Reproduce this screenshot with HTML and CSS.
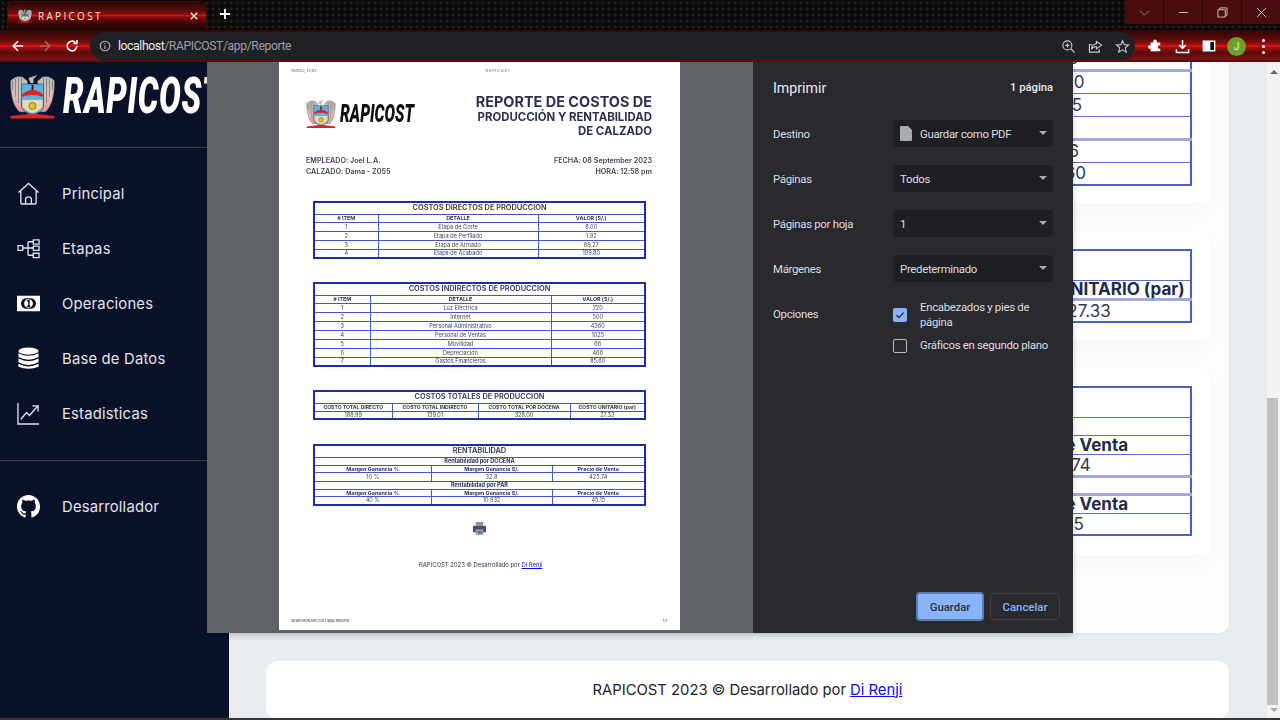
FILE: index.html
```html
<!DOCTYPE html>
<html lang="es">
<head>
<meta charset="utf-8">
<title>RAPICOST</title>
<link rel="stylesheet" href="styles.css">
</head>
<body>
<svg class="defs" width="0" height="0" aria-hidden="true">
  <defs>
    <linearGradient id="wing" x1="0" y1="0" x2="0" y2="1">
      <stop offset="0" stop-color="#b9b9b9"/><stop offset=".55" stop-color="#d9c0c0"/><stop offset="1" stop-color="#ef8f8f"/>
    </linearGradient>
  </defs>
  <symbol id="emblem" viewBox="0 0 46 46">
    <path d="M1 7 Q6 1 13 3 L18 7 L18 38 L10 38 Q1 30 1 7Z" fill="url(#wing)" stroke="#555" stroke-width=".5"/>
    <path d="M45 7 Q40 1 33 3 L28 7 L28 38 L36 38 Q45 30 45 7Z" fill="url(#wing)" stroke="#555" stroke-width=".5"/>
    <path d="M3 7 L3 16 M6 5 L6 23 M9 4 L9 29 M12 4 L12 33 M43 7 L43 16 M40 5 L40 23 M37 4 L37 29 M34 4 L34 33" stroke="#777" stroke-width=".8"/>
    <path d="M19 4 L28 1 L24 5 L24 9 L21 9Z" fill="#bdbdbd"/>
    <path d="M12 10 H34 V32 Q34 38 23 41 Q12 38 12 32Z" fill="#58b4de" stroke="#333" stroke-width=".5"/>
    <path d="M22 11 H24 V17 H22Z" fill="#222"/>
    <path d="M12 21 Q23 11 34 21 V23 Q23 19 12 23Z" fill="#e3241d"/>
    <path d="M13 26 H33 V33 Q28 38 23 39 Q18 38 13 33Z" fill="#f2d7a8"/>
    <circle cx="23" cy="32" r="3.6" fill="#d9c13c" stroke="#333" stroke-width=".5"/>
    <path d="M1 42 L23 39.5 L45 42 V44.5 H1Z" fill="#d8242a"/>
  </symbol>
  <symbol id="printer" viewBox="0 0 16 16">
    <path d="M4 1 H12 V5 H4Z" fill="#8a929c"/>
    <path d="M2 5 H14 Q15 5 15 6 V12 H1 V6 Q1 5 2 5Z" fill="#4a5160"/>
    <path d="M4 9 H12 V15 H4Z" fill="#9aa3ad"/>
    <path d="M6 11 H10 V13 H6Z" fill="#3b64a8"/>
  </symbol>
</svg>

<header class="tabbar">
  <div class="tab">
    <svg class="tab-favicon"><use href="#emblem"/></svg>
    <span class="tab-title">RAPICOST</span>
    <svg class="tab-close" viewBox="0 0 10 10"><path d="M1 1 L9 9 M9 1 L1 9"/></svg>
  </div>
  <svg class="new-tab" viewBox="0 0 12 12"><path d="M6 1 V11 M1 6 H11"/></svg>
  <div class="window-controls">
    <div class="win-btn"><svg viewBox="0 0 12 12"><path d="M1 4 L6 9 L11 4"/></svg></div>
    <div class="win-btn"><svg viewBox="0 0 12 12"><path d="M1 6 H11"/></svg></div>
    <div class="win-btn"><svg viewBox="0 0 12 12"><path d="M1 3 H9 V11 H1Z M3 3 V1 H11 V9 H9"/></svg></div>
    <div class="win-btn"><svg viewBox="0 0 12 12"><path d="M1 1 L11 11 M11 1 L1 11"/></svg></div>
  </div>
</header>

<div class="toolbar">
  <svg class="tool-icon" viewBox="0 0 16 16"><path d="M14 8 H2.5 M8 2.5 L2.5 8 L8 13.5"/></svg>
  <svg class="tool-icon dim" viewBox="0 0 16 16"><path d="M2 8 H13.5 M8 2.5 L13.5 8 L8 13.5"/></svg>
  <svg class="tool-icon" viewBox="0 0 16 16"><path d="M13.5 8 A5.5 5.5 0 1 1 11.6 3.8 M13.6 1.2 V5.2 H9.6"/></svg>
  <div class="omnibox">
    <svg class="omni-info" viewBox="0 0 12 12"><circle cx="6" cy="6" r="4.8"/><path d="M6 5.4 V9 M6 3 V4.2"/></svg>
    <span class="url"><span class="url-host">localhost</span>/RAPICOST/app/Reporte</span>
    <div class="omni-actions">
      <svg viewBox="0 0 16 16"><circle cx="6.8" cy="6.8" r="4.8"/><path d="M10.4 10.4 L14.5 14.5 M4.6 6.8 H9 M6.8 4.6 V9"/></svg>
      <svg viewBox="0 0 16 16"><path d="M9 2.5 L14.5 6.5 L9 10.5 V8 Q5 8 3.5 11 Q4 5.5 9 5Z M12 11 V14 H1.5 V6 H4"/></svg>
      <svg viewBox="0 0 16 16"><path d="M8 1.8 L9.8 6 L14.4 6.4 L11 9.4 L12 14 L8 11.6 L4 14 L5 9.4 L1.6 6.4 L6.2 6Z"/></svg>
    </div>
  </div>
  <div class="ext-icons">
    <svg class="ext-fill" viewBox="0 0 16 16"><path d="M6 2.5 A2 2 0 0 1 10 2.5 V4 H14 V7 H13 A2 2 0 0 0 13 11 H14 V14 H3 V11 H2 A2 2 0 0 1 2 7 H3 V4 H6Z"/></svg>
    <svg class="ext-line" viewBox="0 0 16 16"><path d="M8 1 V9.5 M4.5 6.5 L8 10 L11.5 6.5 M1.5 11 V14.5 H14.5 V11"/></svg>
    <svg class="ext-panel" viewBox="0 0 16 16"><path class="panel-frame" d="M1.5 2.5 H14.5 V13.5 H1.5Z"/><path class="panel-side" d="M1.5 2.5 H9.5 V13.5 H1.5Z"/></svg>
    <div class="avatar">J</div>
    <div class="kebab"><i></i><i></i><i></i></div>
  </div>
</div>

<div class="viewport">
  <aside class="sidebar">
    <div class="brand">
      <svg class="brand-emblem"><use href="#emblem"/></svg>
      <span class="brand-name">RAPICOST</span>
    </div>
    <nav class="nav nav-main">
      <a class="nav-item">
        <svg class="nav-icon" viewBox="0 0 24 24"><path d="M1.5 11 L12 1.5 L22.5 11 M4 9 V21 Q4 23 6 23 H18 Q20 23 20 21 V9 M9 23 V18 Q9 15.5 12 15.5 Q15 15.5 15 18 V23"/></svg>
        <span>Principal</span>
      </a>
      <a class="nav-item">
        <svg class="nav-icon" viewBox="0 0 24 24"><path d="M1 9 H6 V14 H1Z M17 3 H23 V7.5 H17Z M17 9.5 H23 V14 H17Z M17 17 H23 V21.5 H17Z M6 11.5 H17 M11.5 5 V19 M11.5 5 H17 M11.5 19 H17"/></svg>
        <span>Etapas</span>
      </a>
      <a class="nav-item">
        <svg class="nav-icon solid" viewBox="0 0 24 24"><path fill-rule="evenodd" d="M0 4 H24 V20 H0Z M4 12 Q5 7 9 6.5 H15 Q19 7 20 12 Q19 17 15 17.5 H9 Q5 17 4 12Z"/><circle cx="12" cy="12" r="4.6" fill="#fff"/><path class="bill-one" d="M10.6 9.6 L12.4 8.6 V15 M10.6 15 H14"/></svg>
        <span>Operaciones</span>
      </a>
      <a class="nav-item">
        <svg class="nav-icon solid" viewBox="0 0 24 24"><ellipse cx="12" cy="4.2" rx="10.5" ry="3.8"/><path d="M1.5 6.5 Q12 12 22.5 6.5 V10.5 Q12 16 1.5 10.5Z M1.5 12 Q12 17.5 22.5 12 V16 Q12 21.5 1.5 16Z M1.5 17.5 Q12 23 22.5 17.5 V20.5 Q12 25 1.5 20.5Z"/></svg>
        <span>Base de Datos</span>
      </a>
      <a class="nav-item">
        <svg class="nav-icon" viewBox="0 0 24 24"><path d="M1 1 V23 H23 M4 18 L10 11 L13 14 L21 5 M16 4 H22 V10"/></svg>
        <span>Estadisticas</span>
      </a>
    </nav>
    <div class="nav-sep"></div>
    <nav class="nav">
      <a class="nav-item">
        <svg class="nav-icon solid" viewBox="0 0 16 16"><path d="M8 0C3.58 0 0 3.58 0 8c0 3.54 2.29 6.53 5.47 7.59.4.07.55-.17.55-.38 0-.19-.01-.82-.01-1.49-2.01.37-2.53-.49-2.69-.94-.09-.23-.48-.94-.82-1.13-.28-.15-.68-.52-.01-.53.63-.01 1.08.58 1.23.82.72 1.21 1.87.87 2.33.66.07-.52.28-.87.51-1.07-1.78-.2-3.64-.89-3.64-3.95 0-.87.31-1.59.82-2.15-.08-.2-.36-1.02.08-2.12 0 0 .67-.21 2.2.82.64-.18 1.32-.27 2-.27s1.36.09 2 .27c1.53-1.04 2.2-.82 2.2-.82.44 1.1.16 1.92.08 2.12.51.56.82 1.27.82 2.15 0 3.07-1.87 3.75-3.65 3.95.29.25.54.73.54 1.48 0 1.07-.01 1.93-.01 2.2 0 .21.15.46.55.38A8.01 8.01 0 0 0 16 8c0-4.42-3.58-8-8-8z"/></svg>
        <span>Desarrollador</span>
      </a>
    </nav>
  </aside>

  <main class="main">
    <div class="content-card">
      <section class="card">
        <table class="report-table col-wide">
          <tr><td>500</td></tr>
          <tr class="thick"><td>4360</td></tr>
          <tr><td>1025</td></tr>
          <tr><td>66</td></tr>
          <tr class="thick"><td>466</td></tr>
          <tr><td>85.60</td></tr>
        </table>
      </section>
      <section class="card">
        <table class="report-table col-narrow rows-b">
          <tr class="title-row"><th></th></tr>
          <tr><th>COSTO UNITARIO (par)</th></tr>
          <tr class="thick"><td>27.33</td></tr>
        </table>
      </section>
      <section class="card">
        <table class="report-table col-wide rows-c">
          <tr class="title-row"><th></th></tr>
          <tr class="sub-row"><th></th></tr>
          <tr><th>Precio de Venta</th></tr>
          <tr class="tall"><td>425.74</td></tr>
          <tr class="sub-row thick"><th></th></tr>
          <tr class="thick"><th>Precio de Venta</th></tr>
          <tr class="tall"><td>45.15</td></tr>
        </table>
      </section>
    </div>
    <footer class="page-footer"><div>RAPICOST 2023 © Desarrollado por <a class="link">Di Renji</a></div></footer>
  </main>
  <div class="scrollbar">
    <span class="arrow-up"></span>
    <span class="thumb"></span>
    <span class="arrow-down"></span>
  </div>

  <div class="print-dialog">
    <div class="preview">
      <article class="paper">
        <div class="paper-head"><span>10/9/23, 13:02</span><span class="paper-head-title">RAPICOST</span></div>
        <div class="doc-top">
          <div class="doc-brand">
            <svg class="doc-emblem"><use href="#emblem"/></svg>
            <span class="doc-name">RAPICOST</span>
          </div>
          <div class="doc-title">
            <div class="t1">REPORTE DE COSTOS DE</div>
            <div class="t2">PRODUCCIÓN Y RENTABILIDAD</div>
            <div class="t2">DE CALZADO</div>
          </div>
        </div>
        <div class="doc-meta">
          <div>EMPLEADO: Joel L.A.<br>CALZADO: Dama - Z055</div>
          <div class="meta-right">FECHA: 08 September 2023<br>HORA: 12:58 pm</div>
        </div>

        <table class="ptable t-direct">
          <colgroup><col class="c64"><col class="c160"><col></colgroup>
          <tr class="pt-title"><th colspan="3">COSTOS DIRECTOS DE PRODUCCION</th></tr>
          <tr class="pt-head"><th># ITEM</th><th>DETALLE</th><th>VALOR (S/.)</th></tr>
          <tr><td>1</td><td>Etapa de Corte</td><td>8.00</td></tr>
          <tr><td>2</td><td>Etapa de Perfilado</td><td>1.92</td></tr>
          <tr><td>3</td><td>Etapa de Armado</td><td>69.27</td></tr>
          <tr><td>4</td><td>Etapa de Acabado</td><td>109.80</td></tr>
        </table>

        <table class="ptable t-indirect">
          <colgroup><col class="c56"><col class="c181"><col></colgroup>
          <tr class="pt-title"><th colspan="3">COSTOS INDIRECTOS DE PRODUCCION</th></tr>
          <tr class="pt-head"><th># ITEM</th><th>DETALLE</th><th>VALOR (S/.)</th></tr>
          <tr><td>1</td><td>Luz Eléctrica</td><td>720</td></tr>
          <tr><td>2</td><td>Internet</td><td>500</td></tr>
          <tr><td>3</td><td>Personal Administrativo</td><td>4360</td></tr>
          <tr><td>4</td><td>Personal de Ventas</td><td>1025</td></tr>
          <tr><td>5</td><td>Movilidad</td><td>66</td></tr>
          <tr><td>6</td><td>Depreciación</td><td>466</td></tr>
          <tr><td>7</td><td>Gastos Financieros</td><td>85.60</td></tr>
        </table>

        <table class="ptable t-total">
          <colgroup><col class="c78"><col class="c86"><col class="c92"><col></colgroup>
          <tr class="pt-title"><th colspan="4">COSTOS TOTALES DE PRODUCCION</th></tr>
          <tr class="pt-head"><th>COSTO TOTAL DIRECTO</th><th>COSTO TOTAL INDIRECTO</th><th>COSTO TOTAL POR DOCENA</th><th>COSTO UNITARIO (par)</th></tr>
          <tr><td>188.99</td><td>139.01</td><td>328.00</td><td>27.33</td></tr>
        </table>

        <table class="ptable t-rent">
          <colgroup><col class="c117"><col class="c121"><col></colgroup>
          <tr class="pt-title"><th colspan="3">RENTABILIDAD</th></tr>
          <tr class="pt-sub"><th colspan="3">Rentabilidad por DOCENA</th></tr>
          <tr class="pt-head"><th>Margen Ganancia %</th><th>Margen Ganancia S/.</th><th>Precio de Venta</th></tr>
          <tr><td>10 %</td><td>32.8</td><td>425.74</td></tr>
          <tr class="pt-sub"><th colspan="3">Rentabilidad por PAR</th></tr>
          <tr class="pt-head"><th>Margen Ganancia %</th><th>Margen Ganancia S/.</th><th>Precio de Venta</th></tr>
          <tr><td>40 %</td><td>10.932</td><td>45.15</td></tr>
        </table>

        <svg class="doc-printer"><use href="#printer"/></svg>
        <div class="doc-footer">RAPICOST 2023 © Desarrollado por <a class="link">Di Renji</a></div>
        <div class="paper-foot"><span>localhost/RAPICOST/app/Reporte</span><span>1/1</span></div>
      </article>
    </div>
    <div class="print-panel">
      <div class="panel-head"><span class="panel-title">Imprimir</span><span class="panel-count">1 página</span></div>
      <div class="opt-row"><span>Destino</span>
        <div class="select"><svg class="doc-icon" viewBox="0 0 12 15"><path d="M1 0 H8 L12 4 V14 Q12 15 11 15 H1 Q0 15 0 14 V1 Q0 0 1 0Z"/></svg>Guardar como PDF<i class="caret"></i></div></div>
      <div class="opt-row"><span>Páginas</span><div class="select">Todos<i class="caret"></i></div></div>
      <div class="opt-row"><span>Páginas por hoja</span><div class="select">1<i class="caret"></i></div></div>
      <div class="opt-row"><span>Márgenes</span><div class="select">Predeterminado<i class="caret"></i></div></div>
      <div class="opt-row opt-checks"><span>Opciones</span>
        <div class="checks">
          <div class="check-row"><span class="box on"><svg viewBox="0 0 14 14"><path d="M3.5 7.2 L6 9.6 L10.6 4.6"/></svg></span><span>Encabezados y pies de página</span></div>
          <div class="check-row"><span class="box"></span><span>Gráficos en segundo plano</span></div>
        </div>
      </div>
      <div class="panel-actions">
        <button class="btn btn-primary">Guardar</button>
        <button class="btn">Cancelar</button>
      </div>
    </div>
  </div>
</div>
<div class="window-edge"></div>
</body>
</html>
```
FILE: styles.css
```css
* { box-sizing: border-box; }
html, body { margin: 0; height: 100%; }
body { width: 1280px; height: 720px; overflow: hidden; display: flex; flex-direction: column; font-family: Inter, "Liberation Sans", sans-serif; background: #e9ecef; }
.defs { position: absolute; }

/* Browser chrome */
.tabbar { height: 30px; flex: none; display: flex; align-items: flex-start; position: relative; background-color: #0a0a0a; background-image: radial-gradient(circle at 3px 3px, #1e1e1e 1.4px, transparent 1.8px); background-size: 6px 6px; }
.tab { width: 200px; height: 28px; margin: 1px 0 0 7px; padding: 0 8px 0 10px; display: flex; align-items: center; border-radius: 7px 7px 0 0; background: linear-gradient(#2b0505 0, #4f0c0c 28%, #8f1010 46%, #d81010 50%, #7d0d0d 56%, #3a0707 80%, #2b0505 100%); border: 1px solid #3a1010; border-bottom: 0; }
.tab-favicon { width: 14px; height: 14px; }
.tab-title { margin-left: 6px; color: #e8e0e0; font-size: 10px; letter-spacing: 2.3px; flex: 1; font-family: "Open Sans", sans-serif; font-weight: 400; }
.tab-close { width: 8px; height: 8px; fill: none; stroke: #f2f2f2; stroke-width: 1.6; }
.new-tab { width: 12px; height: 12px; margin: 8px 0 0 12px; fill: none; stroke: #fff; stroke-width: 1.8; }
.window-controls { margin-left: auto; display: flex; height: 24px; gap: 1px; background: #260606; }
.win-btn { width: 38px; height: 24px; background: #4a0d0d; display: flex; align-items: center; justify-content: center; }
.win-btn svg { width: 11px; height: 11px; fill: none; stroke: #d8c4c4; stroke-width: 1; }
.win-btn:first-child svg { stroke: #9c7f7f; }

.toolbar { height: 32px; flex: none; display: flex; align-items: center; background: linear-gradient(#3c0808 0, #350707 5%, #5c0b0b 30%, #a01010 46%, #f01010 50%, #a01010 54%, #5c0b0b 72%, #7a1212 90%, #4a0c0c 100%); padding-left: 11px; }
.tool-icon { width: 14px; height: 14px; margin-right: 13px; fill: none; stroke: #fff; stroke-width: 1.8; flex: none; }
.tool-icon.dim { stroke: #9a6a6a; }
.omnibox { margin-left: -2px; width: 1045px; height: 28px; border-radius: 14px; background: #202124; display: flex; align-items: center; padding: 0 5px 0 9px; flex: none; }
.omni-info { width: 12px; height: 12px; fill: none; stroke: #b0b3b8; stroke-width: 1.1; }
.url { margin-left: 7px; font: 12.2px Roboto, "Liberation Sans", sans-serif; letter-spacing: -.4px; color: #9aa0a6; }
.url-host { color: #e8eaed; }
.omni-actions { margin-left: auto; display: flex; gap: 12px; }
.omni-actions svg { width: 15px; height: 15px; fill: none; stroke: #c4c7cb; stroke-width: 1.2; }
.ext-icons { flex: 1; display: flex; align-items: center; padding-left: 13px; }
.ext-fill { width: 14px; height: 14px; fill: #fff; }
.ext-line { width: 15px; height: 15px; margin-left: 13px; fill: none; stroke: #fff; stroke-width: 1.6; }
.ext-panel { width: 14px; height: 14px; margin-left: 12px; }
.panel-frame { fill: #111; stroke: #fff; stroke-width: 1.6; }
.panel-side { fill: #fff; }
.avatar { width: 19px; height: 19px; margin-left: 11px; border-radius: 50%; background: #6aa12c; color: #e8f3d8; font-size: 10px; display: flex; align-items: center; justify-content: center; }
.kebab { margin-left: 16px; display: flex; flex-direction: column; gap: 3px; }
.kebab i { width: 3px; height: 3px; border-radius: 50%; background: #fff; display: block; }

/* Page */
.viewport { flex: 1; min-height: 0; position: relative; display: flex; overflow: hidden; background: #e9ecef; }
.window-edge { height: 2px; flex: none; background: #34363a; }
.sidebar { width: 229px; flex: none; background: #0a122a; color: #e9ecef; overflow: hidden; }
.brand { height: 86px; border-bottom: 1px solid #3c4150; display: flex; align-items: flex-start; padding: 12px 0 0 9px; }
.brand-emblem { width: 47px; height: 46px; flex: none; }
.brand-name { margin: -3px 0 0 7px; font: italic 900 50px/50px Roboto, sans-serif; color: #fff; letter-spacing: 1px; white-space: nowrap; transform: scaleX(.65); transform-origin: left center; }
.nav { display: flex; flex-direction: column; }
.nav-main { padding-top: 18px; }
.nav-item { height: 55px; display: flex; align-items: center; padding-left: 17px; font-size: 14.8px; letter-spacing: .2px; color: #e2e5ea; }
.nav-item span { margin-left: 22px; }
.nav-icon { width: 23px; height: 23px; flex: none; fill: none; stroke: #dfe2e8; stroke-width: 1.4; }
.nav-icon.solid { fill: #fff; stroke: none; }
.bill-one { fill: none; stroke: #0a122a; stroke-width: 1.6; }
.nav-sep { height: 1px; margin: 19px 0 18px; background: #3c4150; }

.main { flex: 1; min-width: 0; display: flex; flex-direction: column; justify-content: flex-end; overflow: hidden; }
.content-card { flex: none; margin: 0 38px 28px 0; padding: 0 18px 78px 37px; background: #fdfdfd; border-radius: 0 0 10px 0; display: flex; flex-direction: column; gap: 28px; box-shadow: 0 1px 3px rgba(0,0,0,.03); }
.card { padding: 18px 19px 17px 0; background: #fff; border-radius: 12px; box-shadow: 0 8px 24px rgba(0,0,0,.03); }
.card:last-child { padding-bottom: 19px; }
.report-table { margin-left: auto; border-collapse: collapse; border: 2px solid #4a5fc1; font-size: 17px; line-height: 16px; color: #343a50; }
.col-wide { width: 258px; }
.col-narrow { width: 206px; }
.report-table td, .report-table th { border: 1px solid #5b6fca; text-align: center; padding: 0; height: 23px; white-space: nowrap; }
.report-table th { color: #232a4a; font-weight: 700; }
.report-table .thick td, .report-table .thick th { border-top: 3px solid #a0aade; }
.rows-b .title-row th { height: 30px; }
.rows-b th { height: 19px; }
.rows-b td { height: 23px; }
.rows-c .title-row th { height: 30px; }
.rows-c th { height: 19px; }
.rows-c .sub-row th { height: 18px; }
.rows-c tr.tall td { height: 22px; }
.page-footer { flex: none; margin: 0 38px 0 37px; height: 57px; background: #fff; border-radius: 12px 12px 10px 10px; display: flex; align-items: center; justify-content: center; font-size: 14.8px; color: #212529; }
.link { color: #0d0dee; text-decoration: underline; }

.scrollbar { width: 13px; flex: none; background: #f3f3f3; display: flex; flex-direction: column; align-items: center; padding: 8px 0 6px; }
.arrow-up { border: 4px solid transparent; border-top: 0; border-bottom: 4px solid #666; }
.thumb { width: 11px; height: 307px; margin-top: auto; margin-left: -2px; background: #c1c1c1; }
.arrow-down { margin-top: 3px; border: 4px solid transparent; border-bottom: 0; border-top: 4px solid #aaa; }

/* Print dialog */
.print-dialog { position: absolute; left: 207px; top: 0; width: 866px; height: 571px; display: flex; box-shadow: 0 2px 6px rgba(0,0,0,.2); }
.preview { width: 546px; background: #5f6368; padding-left: 72px; overflow: hidden; }
.paper { width: 401px; height: 568px; background: #fff; padding: 0 28px 0 12px; display: flex; flex-direction: column; font-size: 6px; color: #3d4450; filter: blur(.25px); }
.paper-head { margin-top: 6px; height: 6px; line-height: 6px; display: flex; font-size: 3.8px; color: #555; }
.paper-head-title { margin-left: 169px; letter-spacing: .8px; }
.doc-top { margin: 20px 0 0 15px; display: flex; justify-content: space-between; height: 44px; }
.doc-brand { display: flex; align-items: flex-start; padding-top: 4px; }
.doc-emblem { width: 30px; height: 32px; flex: none; }
.doc-name { margin: 2px 0 0 4px; font: italic 900 26px/26px Roboto, sans-serif; color: #111; transform: scaleX(.6); transform-origin: left; white-space: nowrap; width: 74px; }
.doc-title { text-align: right; color: #2a3250; font-weight: 700; }
.t1 { font-size: 14.45px; line-height: 16px; }
.t2 { font-size: 11.4px; line-height: 14px; }
.doc-meta { margin: 17px 0 0 15px; display: flex; justify-content: space-between; font-size: 7.2px; line-height: 11px; font-weight: 600; color: #3f4652; }
.meta-right { text-align: right; }
.ptable { width: 333px; margin-left: 22px; table-layout: fixed; border-collapse: collapse; border: 2px solid #1c2fa8; font-size: 5.6px; line-height: 6px; color: #3f444f; text-align: center; }
.ptable td, .ptable th { border: 1px solid #4255c0; padding: 0; height: 9px; overflow: hidden; white-space: nowrap; }
.ptable th { color: #30364a; font-weight: 700; }
.pt-title th { height: 12px; font-size: 7.4px; font-weight: 600; }
.pt-head th { height: 8px; font-size: 5.4px; }
.pt-sub th { height: 8px; font-size: 5.6px; }
.t-direct { margin-top: 24px; }
.t-indirect { margin-top: 23px; }
.t-total { margin-top: 23px; }
.t-total .pt-head th { font-size: 5.1px; }
.t-total .pt-title th { height: 12px; }
.t-total td { height: 8px; }
.t-rent { margin-top: 24px; }
.t-rent .pt-head th { height: 7px; }
.c64 { width: 64px; }
.c160 { width: 160px; }
.c56 { width: 56px; }
.c181 { width: 181px; }
.c78 { width: 78px; }
.c86 { width: 86px; }
.c92 { width: 92px; }
.c117 { width: 117px; }
.c121 { width: 121px; }
.doc-printer { width: 15px; height: 15px; margin: 15px 0 0 181px; flex: none; }
.doc-footer { margin: 25px 0 0 0; padding-left: 128px; height: 7px; line-height: 7px; font-size: 5.9px; color: #30364a; }
.paper-foot { margin-top: auto; margin-bottom: 7px; margin-right: -15px; display: flex; justify-content: space-between; font-size: 3.7px; line-height: 5px; color: #333; }

.print-panel { width: 320px; background: #292a2d; padding: 0 20px; display: flex; flex-direction: column; font-family: Roboto, "Noto Sans", sans-serif; color: #e8eaed; font-size: 11.4px; letter-spacing: -.3px; }
.panel-head { height: 58px; padding-top: 16px; display: flex; justify-content: space-between; align-items: flex-start; }
.panel-title { font-size: 14.2px; line-height: 20px; letter-spacing: 0; }
.panel-count { font-size: 11.2px; line-height: 20px; font-weight: 500; letter-spacing: 0; }
.opt-row { height: 45px; display: flex; align-items: flex-start; }
.opt-row > span { width: 120px; flex: none; line-height: 28px; color: #dadce0; }
.select { position: relative; width: 160px; height: 27px; border-radius: 4px; background: #1e1f22; display: flex; align-items: center; padding-left: 7px; color: #dadce0; }
.doc-icon { width: 12px; height: 15px; margin: 0 8px 0 0; fill: #a8abb0; }
.caret { position: absolute; right: 6px; top: 11px; border: 4.5px solid transparent; border-bottom: 0; border-top: 4.5px solid #a8abb0; }
.opt-checks { height: auto; }
.checks { flex: 1; }
.check-row { display: flex; align-items: center; gap: 13px; line-height: 15px; margin-bottom: 8px; color: #dadce0; }
.check-row > span:last-child { width: 120px; flex: 1; }
.box { width: 14px; height: 14px; flex: none; border: 1.5px solid #b7bbc0; border-radius: 2px; }
.box.on { border: 0; background: #8ab4f8; }
.box svg { display: block; fill: none; stroke: #202124; stroke-width: 1.4; }
.panel-actions { margin: auto -7px 12px 0; display: flex; justify-content: flex-end; align-items: center; gap: 6px; }
.btn { width: 70px; height: 27px; padding: 0; border: 1px solid #3c4043; border-radius: 4px; background: transparent; color: #8ab4f8; font: 500 11.4px Roboto, sans-serif; }
.btn-primary { width: 68px; height: 29px; background: #8ab4f8; color: #2a3142; border: 2px solid #5a7fb8; }
```
